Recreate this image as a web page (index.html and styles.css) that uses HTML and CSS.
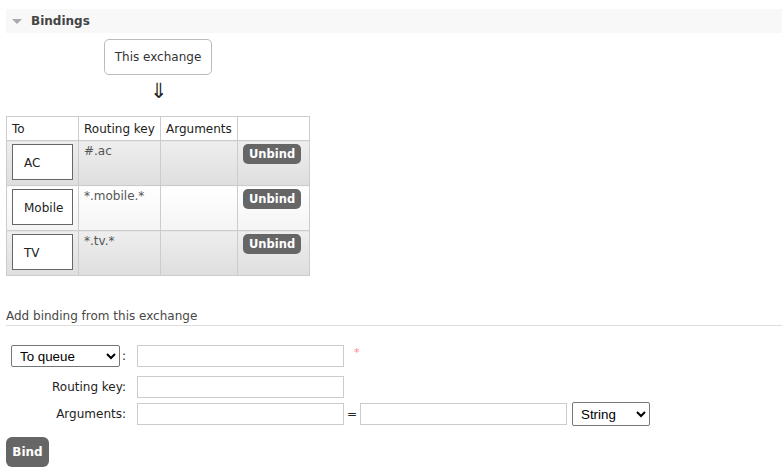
FILE: index.html
```html
<!DOCTYPE html>
<html>
<head>
<meta charset="utf-8">
<link rel="stylesheet" href="styles.css">
</head>
<body>
<div class="page">
  <div class="section-head">
    <span class="tri"></span>
    <span class="section-title">Bindings</span>
  </div>

  <div class="source">
    <div class="exchange-box">This exchange</div>
    <div class="arrow">&#8659;</div>
  </div>

  <table class="bindings">
    <colgroup>
      <col class="c-to"><col class="c-key"><col class="c-args"><col class="c-act">
    </colgroup>
    <thead>
      <tr>
        <th>To</th>
        <th>Routing key</th>
        <th>Arguments</th>
        <th></th>
      </tr>
    </thead>
    <tbody>
      <tr class="alt1">
        <td><span class="dest">AC</span></td>
        <td>#.ac</td>
        <td></td>
        <td><button class="btn-small">Unbind</button></td>
      </tr>
      <tr class="alt2">
        <td><span class="dest">Mobile</span></td>
        <td>*.mobile.*</td>
        <td></td>
        <td><button class="btn-small">Unbind</button></td>
      </tr>
      <tr class="alt1">
        <td><span class="dest">TV</span></td>
        <td>*.tv.*</td>
        <td></td>
        <td><button class="btn-small">Unbind</button></td>
      </tr>
    </tbody>
  </table>

  <h3 class="sub-title">Add binding from this exchange</h3>

  <form class="bind-form">
    <div class="row row-1">
      <div class="label">
        <select class="sel sel-dest"><option>To queue</option><option>To exchange</option></select><span class="colon">:</span>
      </div>
      <input class="field" type="text">
      <span class="req">*</span>
    </div>
    <div class="row row-2">
      <label class="label">Routing key:</label>
      <input class="field" type="text">
    </div>
    <div class="row row-3">
      <label class="label">Arguments:</label>
      <input class="field" type="text">
      <span class="eq">=</span>
      <input class="field" type="text">
      <select class="sel sel-type"><option>String</option><option>Number</option><option>Boolean</option><option>List</option></select>
    </div>
    <button type="button" class="btn-bind">Bind</button>
  </form>
</div>
</body>
</html>
```

FILE: styles.css
```css
html, body {
  margin: 0;
  padding: 0;
  background: #fff;
}

body {
  font-family: "DejaVu Sans", Verdana, sans-serif;
  font-size: 12px;
  color: #484848;
}

.page {
  padding: 9px 0 0 6px;
}

.section-head {
  display: flex;
  align-items: center;
  height: 24px;
  background: #f8f8f8;
}

.tri {
  width: 0;
  height: 0;
  border-left: 5px solid transparent;
  border-right: 5px solid transparent;
  border-top: 5px solid #aaa;
  margin: 1px 0 0 6px;
}

.section-title {
  font-weight: bold;
  font-size: 12px;
  color: #444;
  margin-left: 9px;
}

.source {
  width: 108px;
  margin-left: 98px;
  padding-top: 6px;
}

.exchange-box {
  box-sizing: border-box;
  height: 36px;
  border: 1px solid #bbb;
  border-radius: 5px;
  display: flex;
  align-items: center;
  justify-content: center;
  color: #333;
}

.arrow {
  height: 41px;
  text-align: center;
  font-size: 21px;
  line-height: 32px;
  color: #222;
  padding-left: 1px;
}

.bindings {
  border-collapse: collapse;
  table-layout: fixed;
  width: 303px;
  font-size: 12px;
}

.c-to { width: 72px; }
.c-key { width: 82px; }
.c-args { width: 77px; }
.c-act { width: 72px; }

.bindings th,
.bindings td {
  border: 1px solid #ccc;
  padding: 3px 2px 0 5px;
  text-align: left;
  vertical-align: top;
  white-space: nowrap;
  overflow: hidden;
}

.bindings th {
  height: 23px;
  padding-top: 0;
  vertical-align: middle;
  font-weight: normal;
  color: #222;
  background: #fff;
}

.bindings td {
  height: 41px;
  color: #555;
}

.alt1 td {
  background: linear-gradient(#eeeeee, #dedede);
}

.alt2 td {
  background: linear-gradient(#ffffff, #f4f4f4);
}

.dest {
  box-sizing: border-box;
  display: flex;
  align-items: center;
  width: 61px;
  height: 36px;
  padding: 1px 0 0 11px;
  border: 1px solid #666;
  background: #fff;
  color: #222;
}

.btn-small {
  display: block;
  height: 20px;
  padding: 0 6px;
  border: 0;
  border-radius: 5px;
  background: #666;
  color: #fff;
  font-family: "DejaVu Sans", Verdana, sans-serif;
  font-size: 11.5px;
  font-weight: bold;
  line-height: 20px;
}

.sub-title {
  margin: 33px 0 0 0;
  padding-bottom: 1px;
  border-bottom: 1px solid #ddd;
  font-size: 12px;
  font-weight: normal;
  color: #484848;
  line-height: 15px;
}

.bind-form {
  padding-top: 19px;
}

.row {
  display: flex;
  align-items: center;
  height: 22px;
}

.row-2 { margin-top: 9px; }
.row-3 { margin-top: 5px; }

.label {
  width: 120px;
  margin-right: 11px;
  text-align: right;
  color: #222;
  display: flex;
  justify-content: flex-end;
  align-items: center;
}

.row-1 .label {
  justify-content: flex-start;
  padding-left: 5px;
  width: 115px;
}

.colon {
  margin-left: 2px;
}

.sel {
  font-family: "Liberation Sans", Arial, sans-serif;
  font-size: 13.33px;
  color: #000;
  background: #fff;
  border: 1px solid #767676;
  border-radius: 2px;
  padding-left: 4px;
}

.sel-dest {
  width: 109px;
  height: 22px;
}

.sel-type {
  width: 78px;
  height: 24px;
  margin-left: 5px;
}

.field {
  box-sizing: border-box;
  width: 207px;
  height: 22px;
  border: 1px solid #ccc;
  margin: 0;
  padding: 2px 4px;
  font-size: 12px;
}

.req {
  color: #f88;
  font-size: 11px;
  margin-left: 10px;
  align-self: flex-start;
  margin-top: 1px;
}

.eq {
  width: 16px;
  text-align: center;
  color: #222;
}

.btn-bind {
  display: block;
  margin-top: 12px;
  width: 43px;
  height: 30px;
  border: 0;
  border-radius: 6px;
  background: #666;
  color: #fff;
  font-family: "DejaVu Sans", Verdana, sans-serif;
  font-size: 12px;
  font-weight: bold;
  padding: 0;
}
```
